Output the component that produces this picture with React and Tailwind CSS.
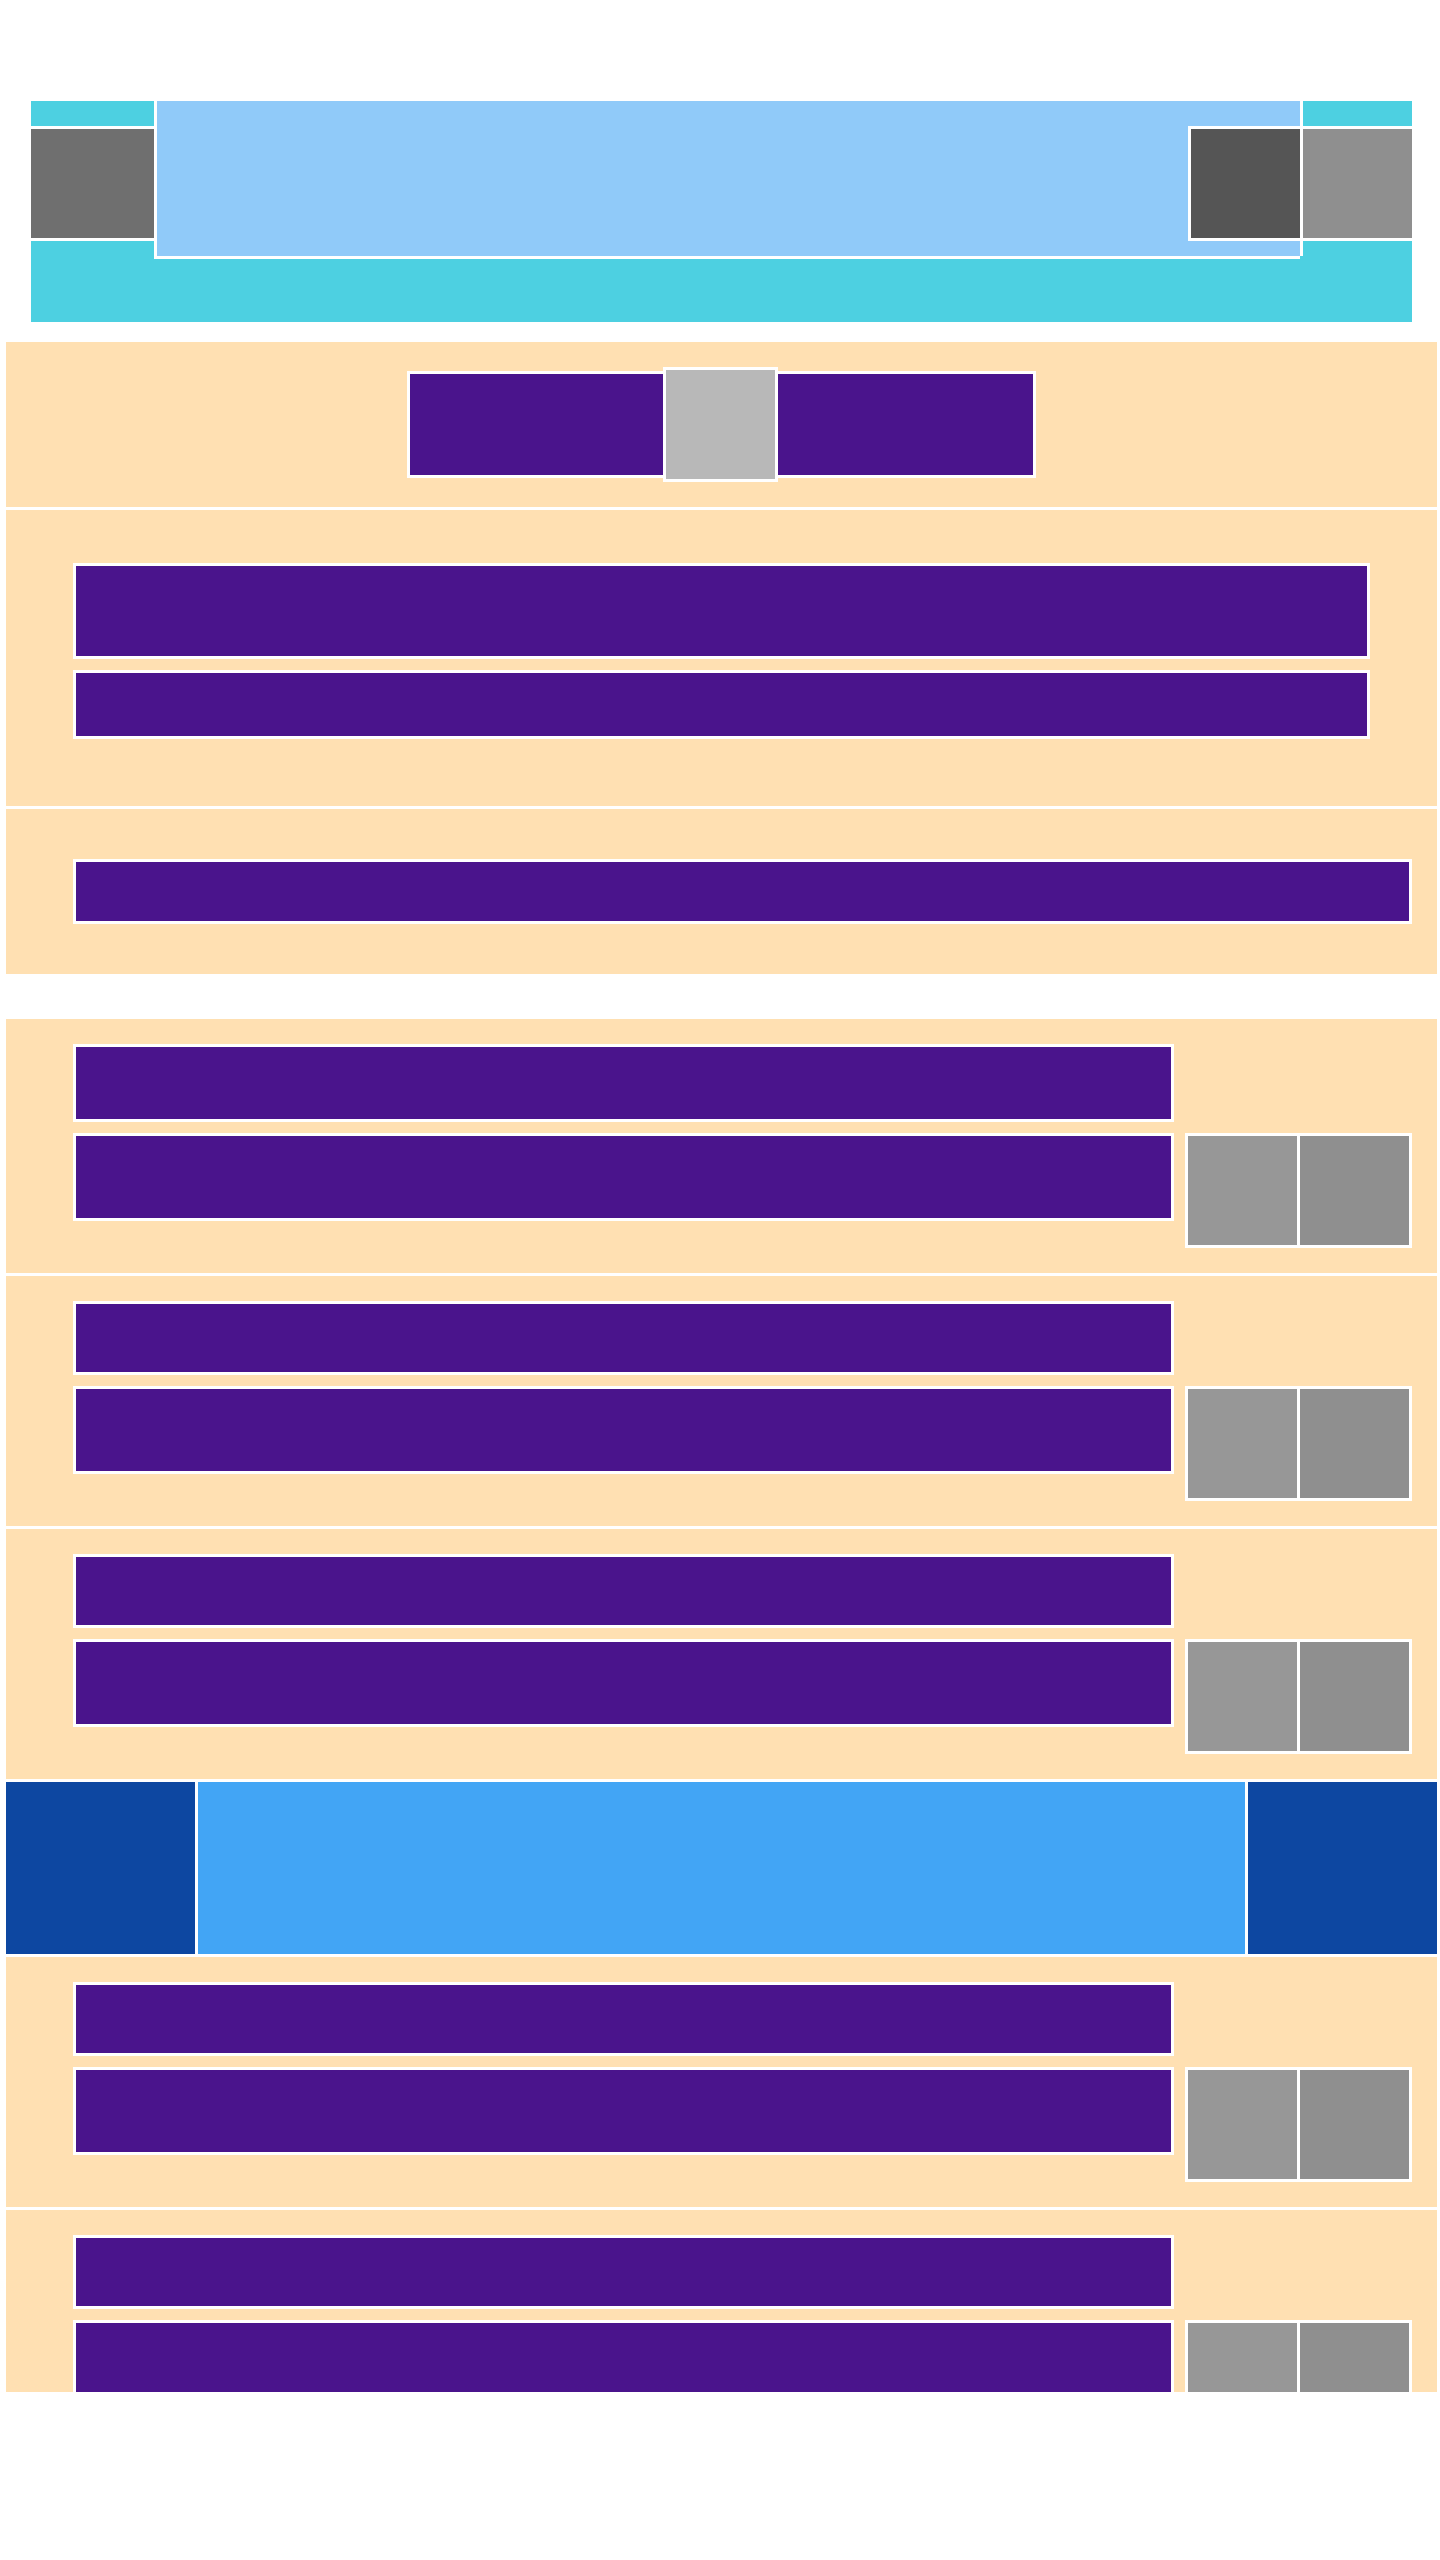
import React from "react";

const cards = [
  { top: 78, bottom: 88 },
  { top: 74, bottom: 88 },
  { top: 74, bottom: 88 },
  "banner",
  { top: 74, bottom: 88 },
  { top: 74, bottom: 88 },
];

function Card({ top, bottom, first }) {
  return (
    <div className={`flex shrink-0 items-end gap-[11px] ${first ? "h-[254px]" : "h-[250px]"} bg-[#ffe0b2] pl-[67px] pr-[25px] py-[25px]`}>
      <div className="flex flex-col gap-[11px] w-[1101px] self-start">
        <div className="border-[3px] border-white bg-[#4a148c]" style={{ height: top }} />
        <div className="border-[3px] border-white bg-[#4a148c]" style={{ height: bottom }} />
      </div>
      <div className="flex h-[115px] w-[227px] border-[3px] border-white">
        <div className="w-[109px] h-full bg-[#979797]" />
        <div className="w-[3px] h-full bg-white" />
        <div className="w-[109px] h-full bg-[#8f8f8f]" />
      </div>
    </div>
  );
}

function Banner() {
  return (
    <div className="flex shrink-0 h-[172px] gap-[3px]">
      <div className="w-[189px] bg-[#0d47a1]" />
      <div className="flex-1 bg-[#42a5f5]" />
      <div className="w-[189px] bg-[#0d47a1]" />
    </div>
  );
}

export default function App() {
  return (
    <div className="min-h-[2560px] bg-white pt-[101px]">
      {/* header */}
      <div className="ml-[31px] w-[1381px] h-[221px] bg-[#4dd0e1] flex items-start">
        <div className="w-[123px] pt-[25px]">
          <div className="h-[115px] border-y-[3px] border-white bg-[#6f6f6f]" />
        </div>
        <div className="w-[1146px] h-[158px] border-l-[3px] border-b-[3px] border-white bg-[#90caf9] flex justify-end pt-[25px]">
          <div className="w-[112px] h-[115px] border-l-[3px] border-y-[3px] border-white bg-[#555555]" />
        </div>
        <div className="w-[112px] h-[155px] border-l-[3px] border-white pt-[25px]">
          <div className="h-[115px] border-y-[3px] border-white bg-[#8f8f8f]" />
        </div>
      </div>

      <div className="mt-[20px] ml-[6px] w-[1431px] h-[2050px] overflow-hidden">
        {/* nav */}
        <div className="h-[165px] bg-[#ffe0b2] flex items-center justify-center">
          <div className="flex items-center">
            <div className="w-[256px] h-[107px] border-l-[3px] border-y-[3px] border-white bg-[#4a148c]" />
            <div className="w-[115px] h-[115px] border-[3px] border-white bg-[#b8b8b8]" />
            <div className="w-[258px] h-[107px] border-r-[3px] border-y-[3px] border-white bg-[#4a148c]" />
          </div>
        </div>

        <div className="mt-[3px] h-[296px] bg-[#ffe0b2] pt-[53px] px-[67px] flex flex-col gap-[11px]">
          <div className="h-[96px] shrink-0 border-[3px] border-white bg-[#4a148c]" />
          <div className="h-[69px] shrink-0 border-[3px] border-white bg-[#4a148c]" />
        </div>

        <div className="mt-[3px] h-[165px] bg-[#ffe0b2] pl-[67px] pr-[25px] flex items-center">
          <div className="w-full h-[65px] border-[3px] border-white bg-[#4a148c]" />
        </div>

        <div className="mt-[45px] flex flex-col gap-[3px]">
          {cards.map((c, i) => (c === "banner" ? <Banner key={i} /> : <Card key={i} first={i === 0} {...c} />))}
        </div>
      </div>
    </div>
  );
}
